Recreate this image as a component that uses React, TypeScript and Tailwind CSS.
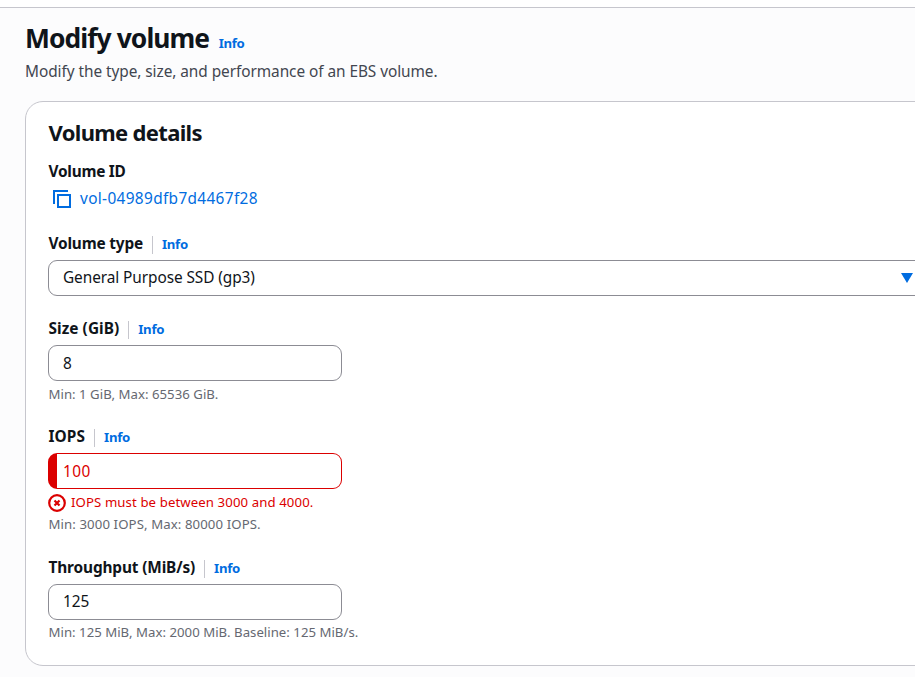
import type { ReactNode } from "react";

function Info({ className = "" }: { className?: string }) {
  return (
    <a className={`text-[13.2px] font-bold tracking-[-0.3px] text-[#006ce0] ${className}`}>Info</a>
  );
}

function FieldLabel({ label, className = "" }: { label: string; className?: string }) {
  return (
    <div className="flex h-[22px] items-start whitespace-nowrap pl-[0.5px] leading-[22px]">
      <span className={`text-[15.4px] font-bold ${className}`}>{label}</span>
      <span className="ml-[9px] mr-[9px] mt-[3px] h-[18px] w-px shrink-0 bg-[#c6c6cd]" />
      <Info />
    </div>
  );
}

function Hint({ children, className = "" }: { children: ReactNode; className?: string }) {
  return (
    <p className={`h-[18px] whitespace-nowrap pl-[0.5px] text-[13.2px] leading-[18px] text-[#656871] ${className}`}>
      {children}
    </p>
  );
}

function Input({ value, className = "" }: { value: string; className?: string }) {
  return (
    <div className={`mt-[5px] flex h-9 w-[294px] items-center rounded-[9px] border border-[#8c8c94] bg-white pl-[14px] text-[15.4px] ${className}`}>
      {value}
    </div>
  );
}

export default function App() {
  return (
    <div className="h-[677px] w-[915px] overflow-hidden bg-[#fcfcfd] font-['Noto_Sans',sans-serif] text-[#0f141a]">
      <div className="h-2 border-b border-[#c6c6cd] bg-white" />
      <header className="h-[93px] pl-[25px] pt-[12px]">
        <div className="flex h-9 items-baseline whitespace-nowrap leading-9">
          <h1 className="text-[26.4px] font-bold tracking-[-0.92px]">Modify volume</h1>
          <Info className="ml-[9.5px]" />
        </div>
        <p className="mt-[5px] whitespace-nowrap text-[15.4px] leading-[22px] tracking-[-0.06px] text-[#424650]">
          Modify the type, size, and performance of an EBS volume.
        </p>
      </header>
      <main className="ml-[25px] h-[565px] w-[960px] rounded-[18px] border border-[#c6c6cd] bg-white pl-[22px] pt-[16px]">
        <h2 className="h-7 pl-[0.5px] text-[22px] font-bold leading-7 tracking-[-0.67px]">Volume details</h2>
        <h3 className="mt-[15px] h-[22px] pl-[0.5px] text-[15.4px] font-bold leading-[22px] tracking-[-0.25px]">Volume ID</h3>
        <div className="mt-[5px] flex h-[22px] items-center text-[#006ce0]">
          <svg className="mb-px ml-[4px]" width="20" height="20" viewBox="0 0 20 20" fill="none" stroke="currentColor" strokeWidth="2">
            <path d="M2 15V2h14" />
            <path d="M6 6h12v12H6z" />
          </svg>
          <a className="ml-[8px] text-[15.4px] tracking-[0.34px]">vol-04989dfb7d4467f28</a>
        </div>
        <section className="mt-[23px]">
          <FieldLabel label="Volume type" className="tracking-[-0.18px]" />
          <div className="mt-[5px] flex h-9 items-center rounded-[9px] border border-[#8c8c94] pl-[14px] text-[15.4px]">
            <span className="w-[838px] whitespace-nowrap tracking-[-0.08px]">General Purpose SSD (gp3)</span>
            <svg width="12" height="10" viewBox="0 0 12 10" fill="#006ce0">
              <path d="M0 0h12L6 10z" />
            </svg>
          </div>
        </section>
        <section className="mt-[22px]">
          <FieldLabel label="Size (GiB)" className="tracking-[0.05px]" />
          <Input value="8" className="pt-[2px]" />
          <Hint className="mt-[4px] tracking-[0.02px]">Min: 1 GiB, Max: 65536 GiB.</Hint>
        </section>
        <section className="mt-[23px]">
          <FieldLabel label="IOPS" className="tracking-[0.1px]" />
          <div className="mt-[5px] flex h-9 w-[294px] items-center rounded-[9px] border border-l-[9px] border-[#db0000] pl-[6px] pt-[2px] text-[15.4px] tracking-[0.4px] text-[#db0000]">
            100
          </div>
          <div className="mt-[4px] flex h-[20px] items-center whitespace-nowrap text-[13.2px] text-[#db0000]">
            <svg width="18" height="18" viewBox="0 0 18 18" fill="none" stroke="currentColor">
              <circle cx="9" cy="9" r="7.8" strokeWidth="2.2" />
              <path d="M6.5 6.5l5 5m0-5l-5 5" strokeWidth="2.2" />
            </svg>
            <span className="ml-[5px] tracking-[0.1px]">IOPS must be between 3000 and 4000.</span>
          </div>
          <Hint className="mt-[2px] tracking-[0.1px]">Min: 3000 IOPS, Max: 80000 IOPS.</Hint>
        </section>
        <section className="mt-[24px]">
          <FieldLabel label="Throughput (MiB/s)" className="tracking-[-0.14px]" />
          <Input value="125" />
          <Hint className="mt-[3px] tracking-[0.02px]">Min: 125 MiB, Max: 2000 MiB. Baseline: 125 MiB/s.</Hint>
        </section>
      </main>
    </div>
  );
}
